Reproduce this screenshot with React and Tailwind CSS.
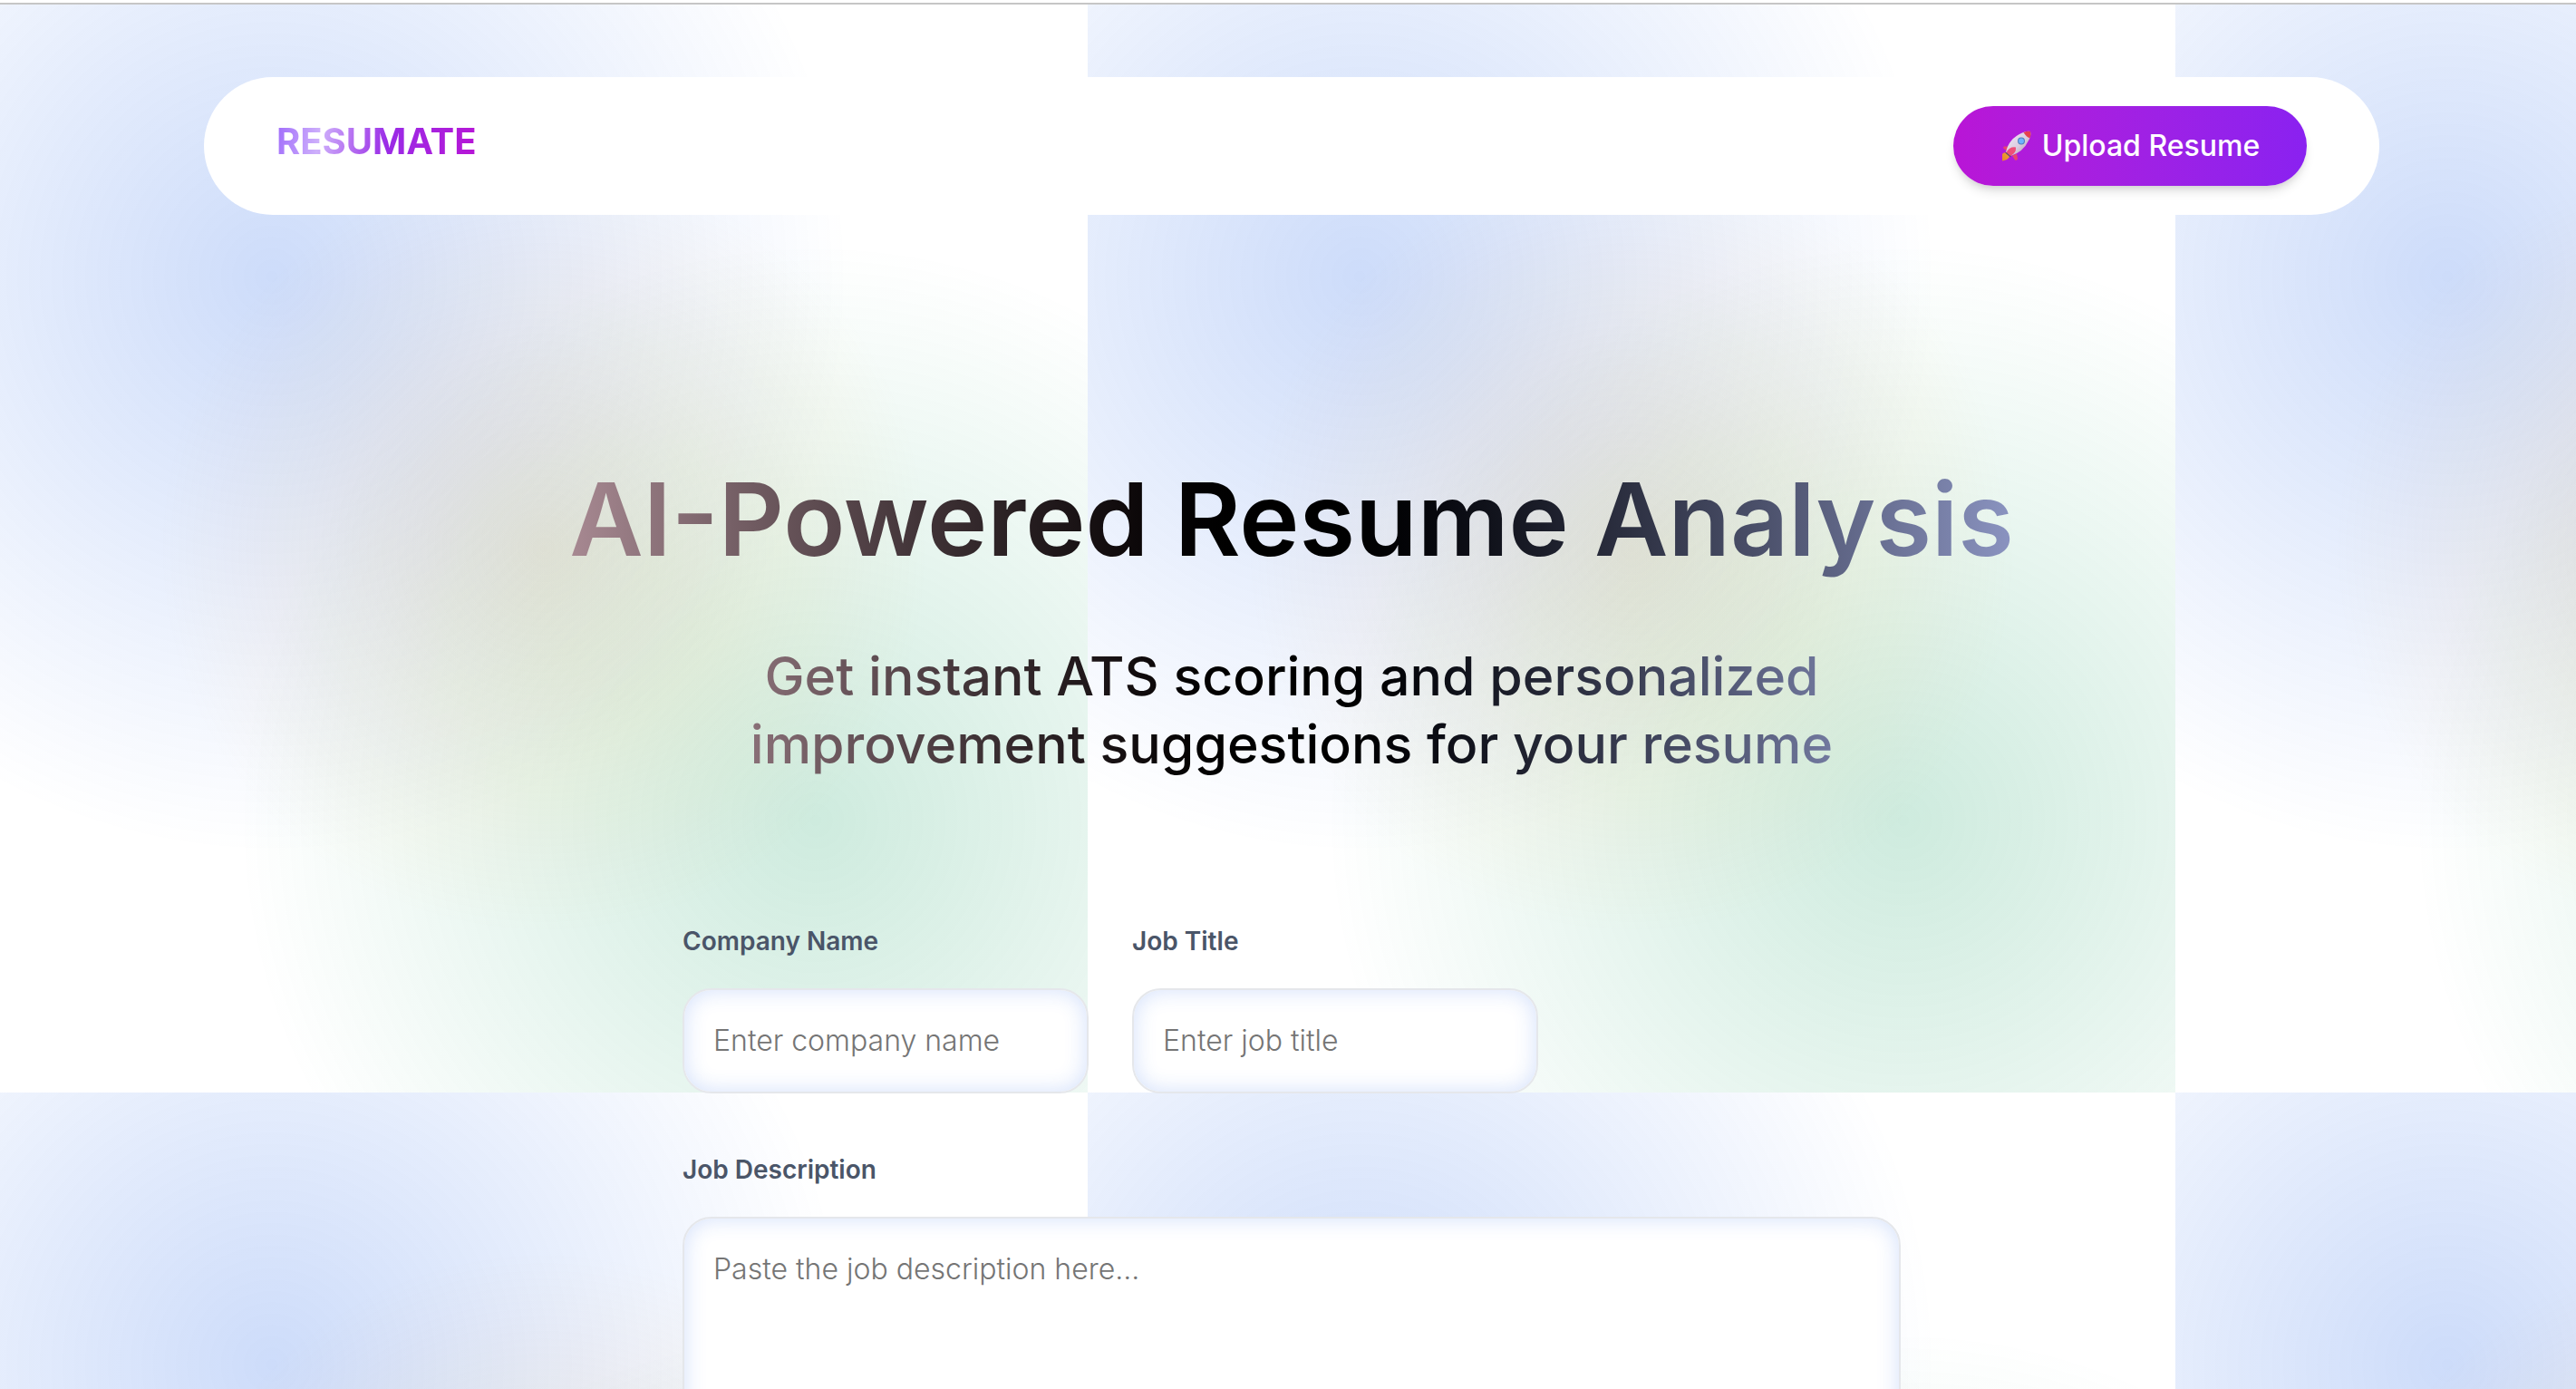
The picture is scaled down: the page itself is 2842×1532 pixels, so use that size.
function Rocket() {
  return (
    <svg viewBox="0 0 34 34" className="size-[34px] shrink-0" aria-hidden="true">
      <defs>
        <linearGradient id="body" x1="0" y1="0" x2="1" y2="1">
          <stop offset="0" stopColor="#f1ecf8" />
          <stop offset="0.55" stopColor="#dccde0" />
          <stop offset="1" stopColor="#a78cab" />
        </linearGradient>
        <linearGradient id="flame" x1="1" y1="0" x2="0" y2="1">
          <stop offset="0" stopColor="#f0a52c" />
          <stop offset="1" stopColor="#e8832f" />
        </linearGradient>
      </defs>
      <path d="M2 26 Q3.500 23.500 7 24.500 L10 29 Q8 32.500 2 33.500 Z" fill="url(#flame)" />
      <path d="M9 17.500 L4 17.500 Q2.500 18 3.500 20 L7 22 Z" fill="#e8466d" />
      <path d="M18 25.500 L19 31 Q18.500 33.500 16 32.500 L13 27.500 Z" fill="#e8466d" />
      <path d="M6 24 Q9 9 24 2.500 Q29 0 33 1 Q34 6 31 11 Q25 24 11 28 Z" fill="url(#body)" />
      <path d="M25.500 2 Q30 0 33 1 Q34 5 32.500 8.500 Q28.500 7 25.500 2 Z" fill="#e5404f" />
      <path d="M5 24.500 L8 23.500 L12 27.500 L11 29.500 Z" fill="#5b5368" />
      <path d="M6.500 24 Q10 17.500 17 18.500 Q17.500 25 11 28 Z" fill="#ef4f78" />
      <circle cx="23" cy="11.500" r="4" fill="#4f7fc0" />
      <circle cx="23" cy="11.500" r="2.900" fill="#6fb3ff" />
    </svg>
  );
}

const labelClass = "text-[28px] leading-10 font-semibold text-[#4a5568]";
const fieldClass =
  "rounded-4xl border-2 border-gray-200 bg-white p-8 text-[32px] leading-12 font-light text-gray-900 shadow-[inset_0_0_24px_rgba(36,99,235,0.2)] outline-none placeholder:text-[#757575]";
const headingGradient =
  "bg-linear-to-r from-[#ab8c95] via-black to-[#8e97c5] bg-clip-text text-transparent";

export default function App() {
  return (
    <div className="flex h-screen flex-col bg-white font-[Inter,sans-serif]">
      <div className="h-[5px] shrink-0 border-b-2 border-[#c6c6c6]" />
      <div className="min-h-0 flex-1 overflow-y-auto [scrollbar-width:none] bg-size-[1200px_1200px] bg-[radial-gradient(circle_at_25%_25%,rgba(5,80,230,0.2),transparent_50%),radial-gradient(circle_at_75%_75%,rgba(10,155,90,0.2),transparent_50%),radial-gradient(circle_at_50%_50%,rgba(250,180,80,0.2),transparent_50%)]">
        <div className="flex flex-col items-center pt-20 pb-16 pl-2">
          <nav className="flex w-full max-w-[2400px] items-center justify-between rounded-full bg-white px-20 py-8">
            <a
              href="#home"
              className="bg-[linear-gradient(100deg,#a06cfb_0%,#ceb0fb_22%,#9a2be6_55%,#b815d5_100%)] bg-clip-text pb-2.5 text-[40px] leading-12 font-bold text-transparent"
            >
              RESUMATE
            </a>
            <a
              href="#upload"
              className="flex h-22 w-[390px] items-center justify-center gap-3 rounded-full bg-linear-to-r from-[#b915d6] to-[#8a21f0] text-[32px] leading-12 font-medium text-white shadow-[0_8px_12px_-2px_rgba(0,0,0,0.12),0_4px_8px_-4px_rgba(0,0,0,0.12)]"
            >
              <Rocket />
              Upload Resume
            </a>
          </nav>

          <header className="flex max-w-[1620px] flex-col items-center gap-17 pt-[267px] text-center">
            <h1 className={`${headingGradient} w-full px-3 text-[112px] leading-[136px] font-semibold whitespace-nowrap`}>
              AI-Powered Resume Analysis
            </h1>
            <h2 className={`${headingGradient} w-full max-w-[1400px] px-16 text-[59px] leading-[75px] font-medium`}>
              Get instant ATS scoring and personalized improvement suggestions for your resume
            </h2>
          </header>

          <form className="flex w-full max-w-[1344px] flex-col gap-16 pt-40">
            <div className="flex gap-12">
              <div className="flex w-1/3 flex-col gap-8">
                <label htmlFor="company" className={labelClass}>Company Name</label>
                <input id="company" type="text" placeholder="Enter company name" className={fieldClass} />
              </div>
              <div className="flex w-1/3 flex-col gap-8">
                <label htmlFor="title" className={labelClass}>Job Title</label>
                <input id="title" type="text" placeholder="Enter job title" className={fieldClass} />
              </div>
            </div>
            <div className="flex flex-col gap-8">
              <label htmlFor="description" className={labelClass}>Job Description</label>
              <textarea id="description" rows={5} placeholder="Paste the job description here..." className={`${fieldClass} resize-none`} />
            </div>
          </form>
        </div>
      </div>
    </div>
  );
}
